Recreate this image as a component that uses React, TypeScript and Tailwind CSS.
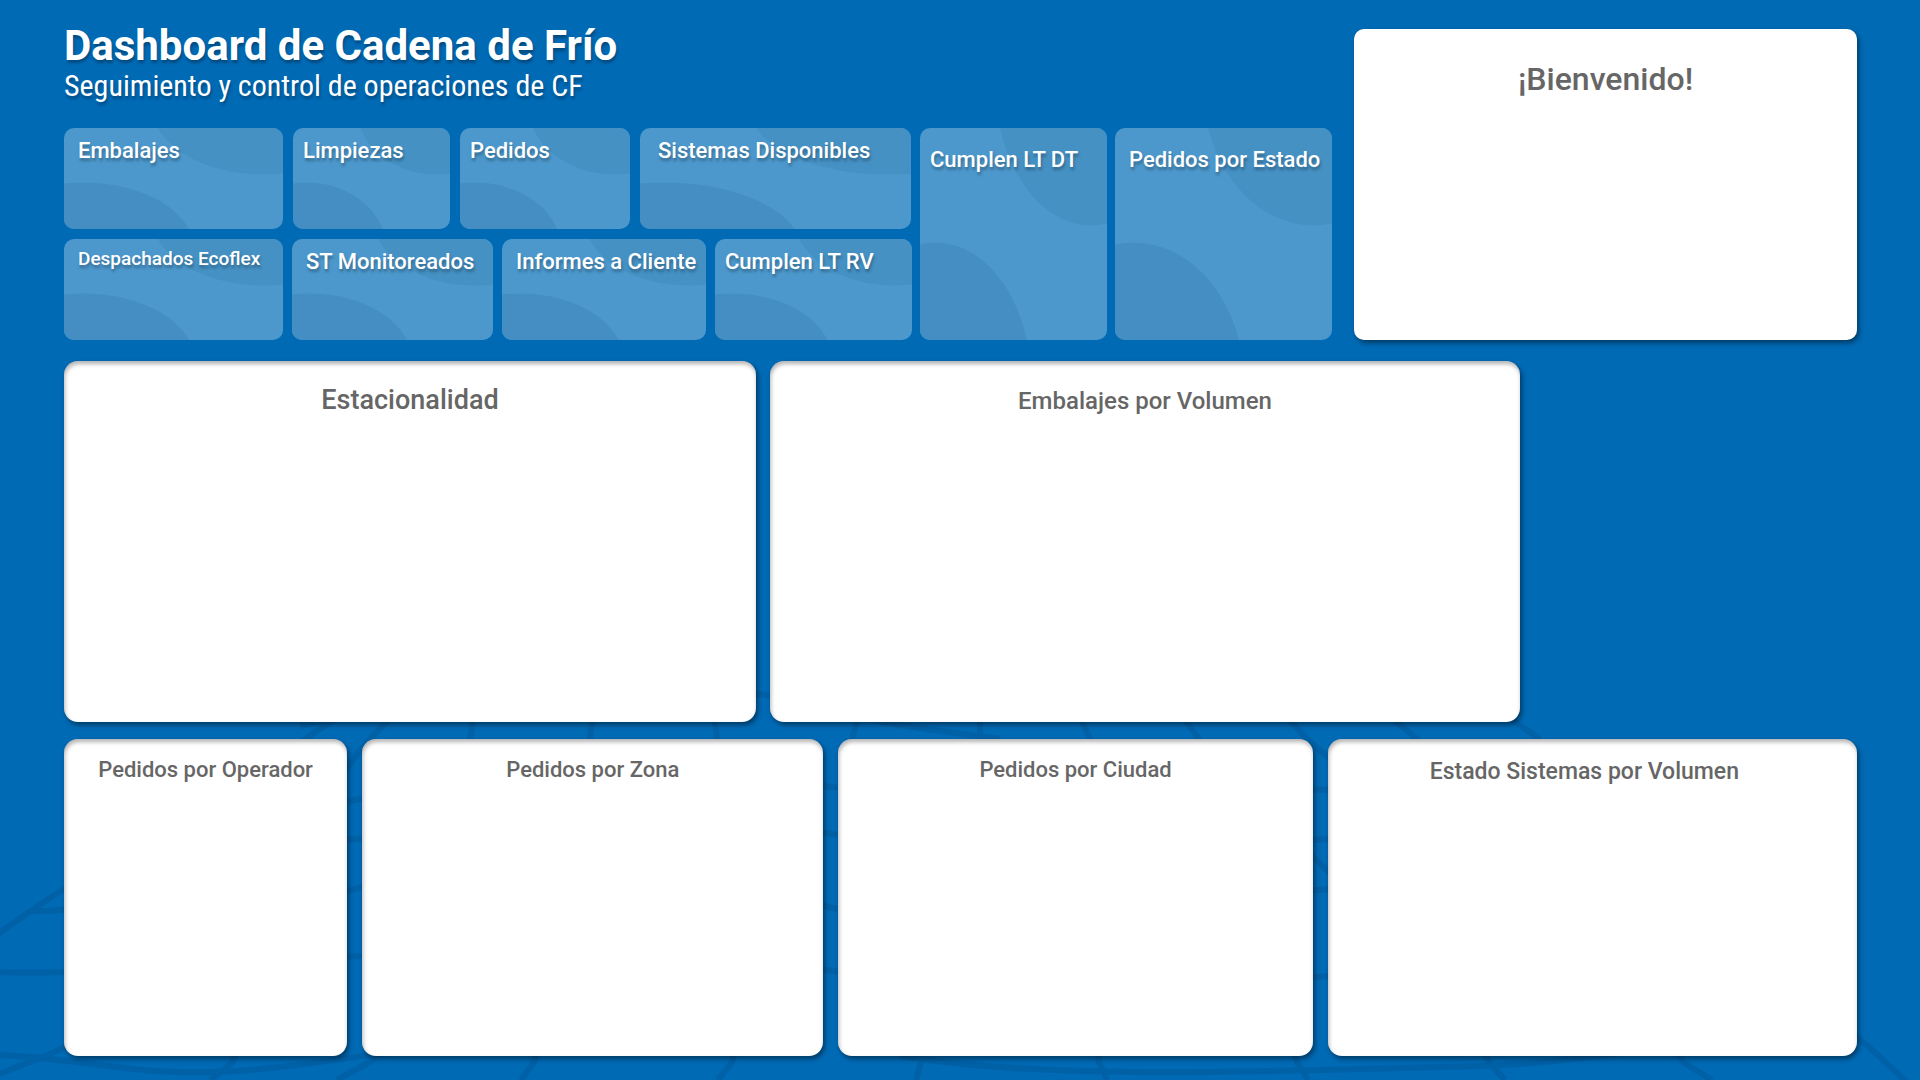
import React from "react";

type CardProps = { title: string; className: string };

function KpiCard({ title, className }: CardProps) {
  return (
    <section className="relative min-w-0 overflow-hidden rounded-[10px] bg-[#4c98cc]">
      <svg
        aria-hidden="true"
        className="absolute inset-0 h-full w-full"
        viewBox="0 0 100 100"
        preserveAspectRatio="none"
      >
        <ellipse cx="91.5" cy="-20" rx="51" ry="66" fill="#4591c4" />
        <ellipse cx="8.5" cy="120" rx="51" ry="66" fill="#458ec3" />
      </svg>
      <h2
        className={`relative whitespace-nowrap font-medium text-white [text-shadow:1px_3px_3px_rgba(0,0,0,0.3)] ${className}`}
      >
        {title}
      </h2>
    </section>
  );
}

function Panel({ title, className }: CardProps) {
  return (
    <section className="min-w-0 rounded-[14px] bg-white shadow-[inset_1px_3px_4px_rgba(0,0,0,0.3),2px_3px_5px_rgba(0,0,0,0.45)]">
      <h2 className={`text-center font-medium text-[#666666] ${className}`}>{title}</h2>
    </section>
  );
}

function GlobeLines() {
  return (
    <svg
      aria-hidden="true"
      className="absolute inset-0 h-full w-full"
      viewBox="0 0 1920 1080"
      preserveAspectRatio="none"
      fill="none"
      stroke="#0061a7"
      strokeWidth="6"
    >
      {/* meridians */}
      <path d="M-10 940 C50 895 200 800 305 739 C330 722 345 712 370 704" />
      <path d="M400 708 L370 739 C310 800 260 980 233 1062 L210 1080" />
      <path d="M474 715 L470 739 C455 800 415 1020 370 1062 L337 1080" />
      <path d="M593 715 L590 739 C570 820 555 1000 534 1062 L521 1080" />
      <path d="M714 715 L717 739 C735 820 750 1000 732 1062 L718 1080" />
      <path d="M859 715 L852 739 C870 820 930 960 921 1062 L916 1080" />
      <path d="M980 715 V739 C1020 820 1090 960 1099 1062 L1107 1080" />
      <path d="M1079 715 L1090 739 C1150 820 1270 960 1297 1062 L1308 1080" />
      <path d="M1182 715 L1199 739 C1290 840 1450 980 1489 1062 L1505 1080" />
      <path d="M1285 715 L1307 739 C1420 840 1640 980 1683 1062 L1712 1080" />
      <path d="M1388 715 L1417 739 C1560 850 1780 980 1867 1045 L1910 1085" />
      <path d="M1505 715 L1540 739" />
      {/* parallels */}
      <path d="M300 726 C450 690 600 690 763 694 C850 720 930 730 1000 739" />
      <path d="M30 911 C150 915 260 820 355 800 C500 770 700 765 830 787 C1000 800 1200 785 1330 790" />
      <path d="M345 840 C500 825 700 815 840 835 C1000 860 1200 845 1330 839" />
      <path d="M345 892 C500 840 700 870 840 910 C1000 930 1200 900 1330 889" />
      <path d="M-10 972 C100 976 260 960 365 956 C500 950 700 950 840 972 C1000 990 1200 985 1330 976" />
      <path d="M-10 1055 C60 1055 130 1075 210 1072 C290 1070 350 1055 420 1050" />
      <path d="M-10 1078 C30 1060 50 1058 90 1032" />
      <path d="M900 1056 C1050 1080 1250 1072 1480 1066 C1540 1064 1590 1058 1640 1050" />
    </svg>
  );
}

export default function App() {
  return (
    <main className="relative flex min-h-screen flex-col bg-[#006ab5] pt-[29px] pr-[63px] pb-6 pl-16 font-['Roboto',sans-serif]">
      <GlobeLines />
      <div className="relative grid flex-[311_1_0px] grid-cols-[1268fr_503fr] gap-x-[22px]">
        <div className="flex min-w-0 flex-col">
          <header className="h-[99px] text-white [text-shadow:1px_3px_3px_rgba(0,0,0,0.3)]">
            <h1 className="text-[42px] leading-[34px] font-bold">Dashboard de Cadena de Frío</h1>
            <p className="font-['Roboto_Condensed','Roboto',sans-serif] text-[30px] leading-[46px]">
              Seguimiento y control de operaciones de CF
            </p>
          </header>
          <div className="grid flex-1 grid-cols-[848fr_187fr_217fr] gap-x-2">
            <div className="grid min-w-0 grid-rows-2 gap-y-[10px]">
              <div className="grid grid-cols-[219fr_157fr_170fr_271fr] gap-x-[10px] pr-px">
                <KpiCard title="Embalajes" className="pt-[9px] pl-[14px] text-[22px] leading-7" />
                <KpiCard title="Limpiezas" className="pt-[9px] pl-[10px] text-[22px] leading-7" />
                <KpiCard title="Pedidos" className="pt-[9px] pl-[10px] text-[22px] leading-7" />
                <KpiCard title="Sistemas Disponibles" className="pt-[9px] pl-[18px] text-[22px] leading-7" />
              </div>
              <div className="grid grid-cols-[219fr_201fr_204fr_197fr] gap-x-[9px]">
                <KpiCard title="Despachados Ecoflex" className="pt-[6px] pl-[14px] text-[19px] leading-7" />
                <KpiCard title="ST Monitoreados" className="pt-[9px] pl-[14px] text-[22px] leading-7" />
                <KpiCard title="Informes a Cliente" className="pt-[9px] pl-[14px] text-[22px] leading-7" />
                <KpiCard title="Cumplen LT RV" className="pt-[9px] pl-[10px] text-[22px] leading-7" />
              </div>
            </div>
            <KpiCard title="Cumplen LT DT" className="pt-[18px] pl-[10px] text-[22px] leading-7" />
            <KpiCard title="Pedidos por Estado" className="pt-[18px] pl-[14px] text-[22px] leading-7" />
          </div>
        </div>
        <section className="min-w-0 rounded-[10px] bg-white shadow-[2px_3px_5px_rgba(0,0,0,0.45)]">
          <h2 className="pt-8 text-center text-[32px] leading-9 font-medium text-[#666666]">
            ¡Bienvenido!
          </h2>
        </section>
      </div>
      <div className="relative mt-[21px] grid flex-[361_1_0px] grid-cols-[692fr_750fr_323fr] gap-x-[14px]">
        <Panel title="Estacionalidad" className="pt-[23px] text-[27px] leading-8" />
        <Panel title="Embalajes por Volumen" className="pt-6 text-[24px] leading-8" />
      </div>
      <div className="relative mt-[17px] grid flex-[317_1_0px] grid-cols-[283fr_461fr_474fr_529fr] gap-x-[15px]">
        <Panel title="Pedidos por Operador" className="pt-[15px] text-[22px] leading-8" />
        <Panel title="Pedidos por Zona" className="pt-[15px] text-[22px] leading-8" />
        <Panel title="Pedidos por Ciudad" className="pt-[15px] text-[22px] leading-8" />
        <Panel title="Estado Sistemas por Volumen" className="pt-[17px] pr-4 text-[23px] leading-8" />
      </div>
    </main>
  );
}
